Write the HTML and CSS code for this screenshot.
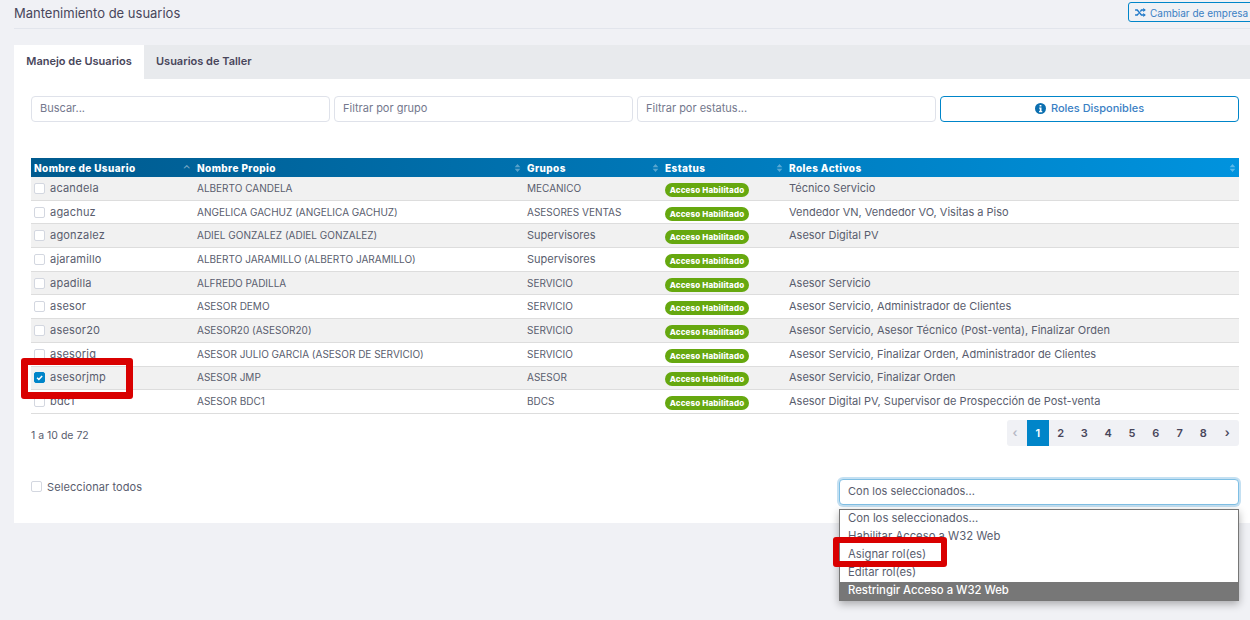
FILE: index.html
```html
<!doctype html>
<html>
<head>
<meta charset="utf-8">
<title>Mantenimiento de usuarios</title>
<link rel="stylesheet" href="styles.css">
</head>
<body>
<svg class="defs" width="0" height="0">
  <symbol id="sort" viewBox="0 0 8 10"><path d="M4 0 7.5 4H.5zM4 10 .5 6h7z"/></symbol>
</svg>

<div class="page">
  <div class="head">
    <h1>Mantenimiento de usuarios</h1>
    <a class="switch">
      <svg viewBox="0 0 12 10" width="11" height="9"><path d="M0 2.2h2.4L7 7.8h2.4M0 7.8h2.4L4 5.9M5.9 4 7 2.2h2.4" fill="none" stroke="#1e78c8" stroke-width="1.5"/><path d="M9 0l3 2.2L9 4.4zM9 5.6l3 2.2L9 10z" fill="#1e78c8"/></svg>
      Cambiar de empresa
    </a>
  </div>

  <div class="panel">
    <div class="tabs">
      <div class="tab active">Manejo de Usuarios</div>
      <div class="tab">Usuarios de Taller</div>
    </div>
    <div class="body">
      <div class="filters">
        <div class="field">Buscar...</div>
        <div class="field">Filtrar por grupo</div>
        <div class="field">Filtrar por estatus...</div>
        <a class="roles">
          <svg viewBox="0 0 12 12" width="11" height="11"><circle cx="6" cy="6" r="6" fill="#0b6fb0"/><path d="M5 2.2h2v1.7H5zM4.6 5h2.5v3.6h.8V10H4.4V8.6h.8V6.300H4.600z" fill="#fff"/></svg>
          Roles Disponibles
        </a>
      </div>

      <table class="users">
        <colgroup><col class="c1"><col class="c2"><col class="c3"><col class="c4"><col></colgroup>
        <thead>
          <tr>
            <th>Nombre de Usuario<span class="asc">&#8963;</span></th>
            <th>Nombre Propio<svg class="sort"><use href="#sort"/></svg></th>
            <th>Grupos<svg class="sort"><use href="#sort"/></svg></th>
            <th>Estatus<svg class="sort"><use href="#sort"/></svg></th>
            <th>Roles Activos<svg class="sort"><use href="#sort"/></svg></th>
          </tr>
        </thead>
        <tbody>
          <tr><td class="login"><span class="check"></span>acandela</td><td class="up">ALBERTO CANDELA</td><td class="up">MECANICO</td><td><span class="badge">Acceso Habilitado</span></td><td>Técnico Servicio</td></tr>
          <tr><td class="login"><span class="check"></span>agachuz</td><td class="up">ANGELICA GACHUZ (ANGELICA GACHUZ)</td><td class="up">ASESORES VENTAS</td><td><span class="badge">Acceso Habilitado</span></td><td>Vendedor VN, Vendedor VO, Visitas a Piso</td></tr>
          <tr><td class="login"><span class="check"></span>agonzalez</td><td class="up">ADIEL GONZALEZ (ADIEL GONZALEZ)</td><td>Supervisores</td><td><span class="badge">Acceso Habilitado</span></td><td>Asesor Digital PV</td></tr>
          <tr><td class="login"><span class="check"></span>ajaramillo</td><td class="up">ALBERTO JARAMILLO (ALBERTO JARAMILLO)</td><td>Supervisores</td><td><span class="badge">Acceso Habilitado</span></td><td></td></tr>
          <tr><td class="login"><span class="check"></span>apadilla</td><td class="up">ALFREDO PADILLA</td><td class="up">SERVICIO</td><td><span class="badge">Acceso Habilitado</span></td><td>Asesor Servicio</td></tr>
          <tr><td class="login"><span class="check"></span>asesor</td><td class="up">ASESOR DEMO</td><td class="up">SERVICIO</td><td><span class="badge">Acceso Habilitado</span></td><td>Asesor Servicio, Administrador de Clientes</td></tr>
          <tr><td class="login"><span class="check"></span>asesor20</td><td class="up">ASESOR20 (ASESOR20)</td><td class="up">SERVICIO</td><td><span class="badge">Acceso Habilitado</span></td><td>Asesor Servicio, Asesor Técnico (Post-venta), Finalizar Orden</td></tr>
          <tr><td class="login"><span class="check"></span>asesorjg</td><td class="up">ASESOR JULIO GARCIA (ASESOR DE SERVICIO)</td><td class="up">SERVICIO</td><td><span class="badge">Acceso Habilitado</span></td><td>Asesor Servicio, Finalizar Orden, Administrador de Clientes</td></tr>
          <tr><td class="login"><span class="check on"><svg viewBox="0 0 10 10" width="11" height="11"><path d="M2.800 5.200 4.400 6.800 7.400 3.600" fill="none" stroke="#fff" stroke-width="1.400"/></svg></span>asesorjmp</td><td class="up">ASESOR JMP</td><td class="up">ASESOR</td><td><span class="badge">Acceso Habilitado</span></td><td>Asesor Servicio, Finalizar Orden</td></tr>
          <tr><td class="login"><span class="check"></span>bdc1</td><td class="up">ASESOR BDC1</td><td class="up">BDCS</td><td><span class="badge">Acceso Habilitado</span></td><td>Asesor Digital PV, Supervisor de Prospección de Post-venta</td></tr>
        </tbody>
      </table>

      <div class="foot">
        <div class="count">1 a 10 de 72</div>
        <div class="pager">
          <span class="arrow off">&#8249;</span>
          <span class="cur">1</span><span>2</span><span>3</span><span>4</span><span>5</span><span>6</span><span>7</span><span>8</span>
          <span class="arrow">&#8250;</span>
        </div>
      </div>

      <div class="bulk">
        <label class="all"><span class="check"></span>Seleccionar todos</label>
        <div class="select">Con los seleccionados...</div>
      </div>
    </div>
  </div>
</div>

<ul class="menu">
  <li>Con los seleccionados...</li>
  <li>Habilitar Acceso a W32 Web</li>
  <li>Asignar rol(es)</li>
  <li>Editar rol(es)</li>
  <li class="hover">Restringir Acceso a W32 Web</li>
</ul>

<div class="mark mark-user"></div>
<div class="mark mark-role"></div>
</body>
</html>
```

FILE: styles.css
```css
html, body { margin:0; padding:0; height:620px; overflow:hidden; background:#f0f1f5; }

body {
  position:relative;
  font: 11px Inter, "Open Sans", sans-serif;
  color:#595d6e;
}

.defs { position:absolute; }

.page {
  width:1242px;
  margin-left:14px;
}

.head {
  display:flex;
  justify-content:space-between;
  align-items:center;
  height:28px;
  border-bottom:1px solid #e2e5ec;
}

h1 {
  margin:0 0 3px;
  font-size:13px;
  font-weight:400;
  color:#48465b;
}

.switch {
  display:flex;
  align-items:center;
  gap:4px;
  width:126px;
  height:20px;
  margin:0 2px 4px 0;
  padding:1px 0 0 6px;
  box-sizing:border-box;
  border:1px solid #0085c9;
  border-radius:3px;
  font-size:10px;
  color:#3a80c4;
  white-space:nowrap;
}

.panel {
  margin-top:16px;
  background:#fff;
  height:478px;
}

.tabs {
  display:flex;
  height:34px;
  background:#e8eaed;
}

.tab {
  display:flex;
  align-items:center;
  padding:0 12px 2px;
  box-sizing:border-box;
  font-size:11px;
  font-weight:600;
  color:#48465b;
}

.tab.active { width:130px; padding:0 0 2px; justify-content:center; background:#fff; }

.body { padding:17px 17px 0; }

.filters {
  display:grid;
  grid-template-columns:repeat(4, 299px);
  gap:4px;
}

.field, .roles {
  height:26px;
  box-sizing:border-box;
  border:1px solid #dfe2ea;
  border-radius:4px;
  display:flex;
  align-items:center;
  padding:0 0 2px 8px;
  color:#74788d;
  font-size:11px;
}

.roles {
  justify-content:center;
  gap:5px;
  padding:0 0 2px;
  border-color:#0085c9;
  color:#3a80c4;
  font-weight:500;
}

.users {
  width:1208px;
  margin-top:36px;
  table-layout:fixed;
  border-collapse:collapse;
}

.c1 { width:163px; }
.c2 { width:330px; }
.c3 { width:138px; }
.c4 { width:124px; }

.users th {
  position:relative;
  height:19px;
  padding:0 3px;
  text-align:left;
  font-size:10px;
  font-weight:800;
  letter-spacing:.4px;
  color:#fff;
}

.users thead tr {
  background:linear-gradient(90deg, #005a8e, #0093de);
}

.sort {
  position:absolute;
  right:3px;
  top:6px;
  width:7px;
  height:8px;
  fill:#fff;
  opacity:.35;
}

.asc {
  position:absolute;
  right:3px;
  top:5px;
  font-size:10px;
  font-weight:400;
  line-height:12px;
  opacity:.5;
}

.users td {
  height:21.700px;
  padding:0 3px 1px;
  border-bottom:1px solid #ddd;
  font-size:11px;
  white-space:nowrap;
}

.users td.up { font-size:10px; }
.users td.login { letter-spacing:.2px; }

.users tbody tr:nth-child(odd) { background:#f1f1f1; }

.check {
  display:inline-block;
  width:9px;
  height:9px;
  border:1px solid #d3d7e0;
  border-radius:2px;
  background:#fff;
  margin-right:5px;
  vertical-align:-2px;
}

.check.on {
  background:#0085c9;
  border-color:#0085c9;
}

.check.on svg { display:block; margin:-1px; }

.badge {
  display:inline-block;
  width:84px;
  height:14px;
  line-height:14px;
  border-radius:7px;
  background:#66a80f;
  color:#fff;
  font-size:8px;
  font-weight:800;
  letter-spacing:.15px;
  text-align:center;
  vertical-align:-3px;
}

.foot {
  display:flex;
  justify-content:space-between;
  align-items:center;
  margin-top:6px;
  height:26px;
}

.count { font-size:10.500px; padding-top:6px; }

.pager {
  display:flex;
  width:232px;
  height:26px;
  background:#f0f1f5;
  border-radius:3px;
  font-weight:600;
  font-size:11px;
  color:#48465b;
}

.pager span {
  width:24px;
  display:flex;
  align-items:center;
  justify-content:center;
}

.pager .arrow { font-size:12px; }
.pager .arrow.off { width:20px; padding-right:4px; box-sizing:border-box; color:#b5b8c5; }
.pager .cur { width:22px; background:#0085c9; color:#fff; }

.bulk {
  display:flex;
  justify-content:space-between;
  margin-top:33px;
}

.all { display:flex; align-items:center; height:14px; margin-top:1px; font-size:11px; letter-spacing:.1px; }

.select {
  width:400px;
  height:26px;
  box-sizing:border-box;
  padding:0 0 2px 8px;
  display:flex;
  align-items:center;
  border:1px solid #7fbfe4;
  border-radius:4px;
  box-shadow:0 0 0 2px #c4e0f2;
  background:#fff;
  font-size:11px;
}

/* open native list, over the panel */
.menu {
  position:absolute;
  left:839px;
  top:509px;
  width:400px;
  height:92px;
  margin:0;
  padding:0;
  box-sizing:border-box;
  list-style:none;
  background:#fff;
  border:1px solid #767676;
  box-shadow:0 3px 8px rgba(0,0,0,.3);
  font-size:11.300px;
}

.menu li { height:18px; line-height:16px; padding-left:8px; }
.menu li.hover { background:#777; color:#fff; font-weight:500; }

/* red marks drawn on the screenshot */
.mark {
  position:absolute;
  box-sizing:border-box;
  border:7px solid #d90000;
  border-radius:3px;
}

.mark-user { left:21px; top:358px; width:112px; height:41px; }
.mark-role { left:833px; top:537px; width:114px; height:30px; border-width:6px; }
```
